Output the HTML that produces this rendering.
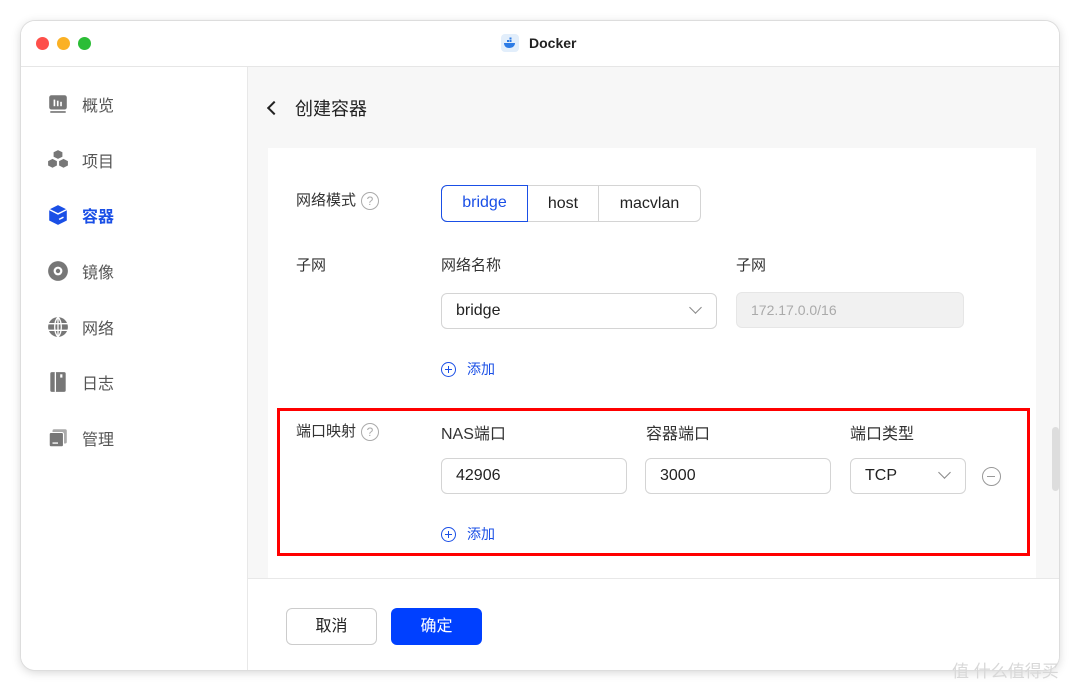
<!DOCTYPE html>
<html><head><meta charset="utf-8"><style>
*{box-sizing:border-box;margin:0;padding:0}
body{width:1080px;height:691px;background:#fff;position:relative;overflow:hidden;font-family:"Liberation Sans","Noto Sans CJK SC",sans-serif;color:#222}
.abs{position:absolute}
.win{left:21px;top:21px;width:1038px;height:649px;border-radius:14px;background:#fff;box-shadow:0 0 0 1px #ddd,0 2px 10px rgba(0,0,0,.18);overflow:hidden}
.tb{left:0;top:0;width:1038px;height:46px;border-bottom:1px solid #e6e6e6;background:#fff}
.dot{width:13px;height:13px;border-radius:50%;top:16px}
.side{left:0;top:46px;width:227px;height:603px;background:#fff;border-right:1px solid #e8e8e8}
.item{left:26px;height:24px;display:flex;align-items:center;font-size:16px;color:#555}
.item svg{width:22px;height:22px;margin-right:13px;flex-shrink:0}
.main{left:227px;top:46px;width:811px;height:603px;background:#f7f7f7}
.card{left:20px;top:81px;width:768px;height:430px;background:#fff}
.lbl{font-size:15px;color:#333}
.q{display:inline-block;width:18px;height:18px;border:1.3px solid #aaa;border-radius:50%;color:#aaa;font-size:12px;text-align:center;line-height:16px;vertical-align:middle;margin-left:5px}
.inp{height:36px;border:1px solid #d4d4d4;border-radius:6px;background:#fff;font-size:16px;padding-left:14px;line-height:34px;color:#222}
.add{font-size:14px;color:#1a4fe6;display:flex;align-items:center}
.plus{width:15px;height:15px;border:1.3px solid #1a4fe6;border-radius:50%;position:relative;margin-right:11px}
.plus:before{content:"";position:absolute;left:3px;top:6px;width:7px;height:1.3px;background:#1a4fe6}
.plus:after{content:"";position:absolute;left:6px;top:3px;width:1.3px;height:7px;background:#1a4fe6}
.chev{position:absolute;right:16px;top:11px;width:9px;height:9px;border-right:1.3px solid #888;border-bottom:1.3px solid #888;transform:rotate(45deg)}
</style></head><body>
<div class="abs win">
 <div class="abs tb">
  <div class="abs dot" style="left:15px;background:#fe4f4a"></div>
  <div class="abs dot" style="left:36px;background:#fbb124"></div>
  <div class="abs dot" style="left:57px;background:#2bbd36"></div>
  <div class="abs" style="left:480px;top:13px;width:18px;height:18px;border-radius:4px;background:#e2eefb"><svg width="18" height="18" viewBox="0 0 18 18"><path d="M3 9h11c0 3-2.5 5-6 5-3 0-5-2-5-5z" fill="#2c7be5"/><rect x="6" y="6" width="2" height="2" fill="#2c7be5"/><rect x="8.5" y="6" width="2" height="2" fill="#2c7be5"/><rect x="8.5" y="3.5" width="2" height="2" fill="#2c7be5"/></svg></div>
  <div class="abs" style="left:508px;top:14px;font-size:14px;font-weight:bold;color:#222">Docker</div>
 </div>
 <div class="abs side">
  <div class="abs item" style="top:25px"><svg viewBox="0 0 20 20"><rect x="2" y="2" width="16" height="13" rx="2" fill="#777"/><rect x="3" y="16.5" width="14" height="1.5" fill="#777"/><rect x="6" y="6" width="1.5" height="6" fill="#fff"/><rect x="9" y="7" width="1.5" height="5" fill="#fff"/><rect x="12" y="8" width="1.5" height="4" fill="#fff"/></svg>概览</div>
  <div class="abs item" style="top:81px"><svg viewBox="0 0 20 20"><path d="M10 1l4 2v4l-4 2-4-2V3zM5 9l4 2v4l-4 2-4-2v-4zM15 9l4 2v4l-4 2-4-2v-4z" fill="#777"/></svg>项目</div>
  <div class="abs item" style="top:136px;color:#1a4fe6;font-weight:bold"><svg viewBox="0 0 20 20"><path d="M10 1l8 4v10l-8 4-8-4V5z" fill="#1a4fe6"/><path d="M2 5l8 4 8-4" stroke="#fff" stroke-width="1.3" fill="none"/><path d="M11 14l4-2" stroke="#fff" stroke-width="1.3"/></svg>容器</div>
  <div class="abs item" style="top:192px"><svg viewBox="0 0 20 20"><circle cx="10" cy="10" r="9" fill="#777"/><circle cx="10" cy="10" r="4" fill="#fff"/><circle cx="10" cy="10" r="2" fill="#777"/></svg>镜像</div>
  <div class="abs item" style="top:248px"><svg viewBox="0 0 20 20"><circle cx="10" cy="10" r="9" fill="#777"/><path d="M1 7h18M1 13h18M10 1v18M10 1c-4 4-4 14 0 18M10 1c4 4 4 14 0 18" stroke="#fff" stroke-width="1.2" fill="none"/></svg>网络</div>
  <div class="abs item" style="top:303px"><svg viewBox="0 0 20 20"><rect x="3" y="1" width="14" height="18" rx="1.5" fill="#777"/><rect x="7" y="1" width="1.2" height="18" fill="#fff"/><rect x="12" y="3" width="2" height="3" fill="#fff"/></svg>日志</div>
  <div class="abs item" style="top:359px"><svg viewBox="0 0 20 20"><rect x="5" y="2" width="13" height="13" rx="1.5" fill="#aaa"/><rect x="2" y="5" width="13" height="13" rx="1.5" fill="#777" stroke="#fff" stroke-width="1"/><rect x="5" y="14" width="5" height="1.2" fill="#fff"/></svg>管理</div>
 </div>
 <div class="abs main">
  <div class="abs" style="left:21px;top:36px;width:10px;height:10px;border-left:2px solid #222;border-bottom:2px solid #222;transform:rotate(45deg)"></div>
  <div class="abs" style="left:47px;top:28px;font-size:18px;color:#222">创建容器</div>
  <div class="abs card">
   <div class="abs lbl" style="left:28px;top:41px">网络模式<span class="q">?</span></div>
   <div class="abs" style="left:173px;top:37px;width:260px;height:37px;border:1px solid #d4d4d4;border-radius:6px;display:flex;font-size:16px">
    <div style="width:87px;border:1.3px solid #1a4fe6;border-radius:6px 0 0 6px;color:#1a4fe6;text-align:center;line-height:34px;margin:-1px 0 -1px -1px">bridge</div>
    <div style="width:71px;border-right:1px solid #d4d4d4;text-align:center;line-height:35px">host</div>
    <div style="flex:1;text-align:center;line-height:35px">macvlan</div>
   </div>
   <div class="abs lbl" style="left:28px;top:106px">子网</div>
   <div class="abs lbl" style="left:173px;top:106px">网络名称</div>
   <div class="abs lbl" style="left:468px;top:106px">子网</div>
   <div class="abs inp" style="left:173px;top:145px;width:276px">bridge<div class="chev" style="top:9px"></div></div>
   <div class="abs inp" style="left:468px;top:144px;width:228px;background:#f1f1f1;border-color:#e6e6e6;color:#aaa;font-size:14px">172.17.0.0/16</div>
   <div class="abs add" style="left:173px;top:211px"><span class="plus"></span>添加</div>
   <div class="abs lbl" style="left:28px;top:272px">端口映射<span class="q">?</span></div>
   <div class="abs lbl" style="left:173px;top:272px;font-size:16px">NAS端口</div>
   <div class="abs lbl" style="left:378px;top:272px;font-size:16px">容器端口</div>
   <div class="abs lbl" style="left:582px;top:272px;font-size:16px">端口类型</div>
   <div class="abs inp" style="left:173px;top:310px;width:186px">42906</div>
   <div class="abs inp" style="left:377px;top:310px;width:186px">3000</div>
   <div class="abs inp" style="left:582px;top:310px;width:116px">TCP<div class="chev" style="top:9px"></div></div>
   <div class="abs" style="left:714px;top:319px;width:19px;height:19px;border:1.3px solid #999;border-radius:50%"><div style="position:absolute;left:4px;top:7.5px;width:8px;height:1.5px;background:#999"></div></div>
   <div class="abs add" style="left:173px;top:376px"><span class="plus"></span>添加</div>
  </div>
  <div class="abs" style="left:804px;top:360px;width:7px;height:64px;border-radius:4px;background:#ddd"></div>
  <div class="abs" style="left:0;top:511px;width:811px;height:92px;background:#fff;border-top:1px solid #e8e8e8">
   <div class="abs" style="left:38px;top:29px;width:91px;height:37px;border:1px solid #ccc;border-radius:6px;text-align:center;line-height:35px;font-size:16px">取消</div>
   <div class="abs" style="left:143px;top:29px;width:91px;height:37px;background:#0040ff;border-radius:6px;text-align:center;line-height:37px;font-size:16px;color:#fff">确定</div>
  </div>
 </div>
</div>
<div class="abs" style="left:277px;top:408px;width:753px;height:148px;border:3px solid #f00"></div>
<div class="abs" style="left:952px;top:657px;font-size:17px;color:#d8d8d8">值 什么值得买</div>
</body></html>
